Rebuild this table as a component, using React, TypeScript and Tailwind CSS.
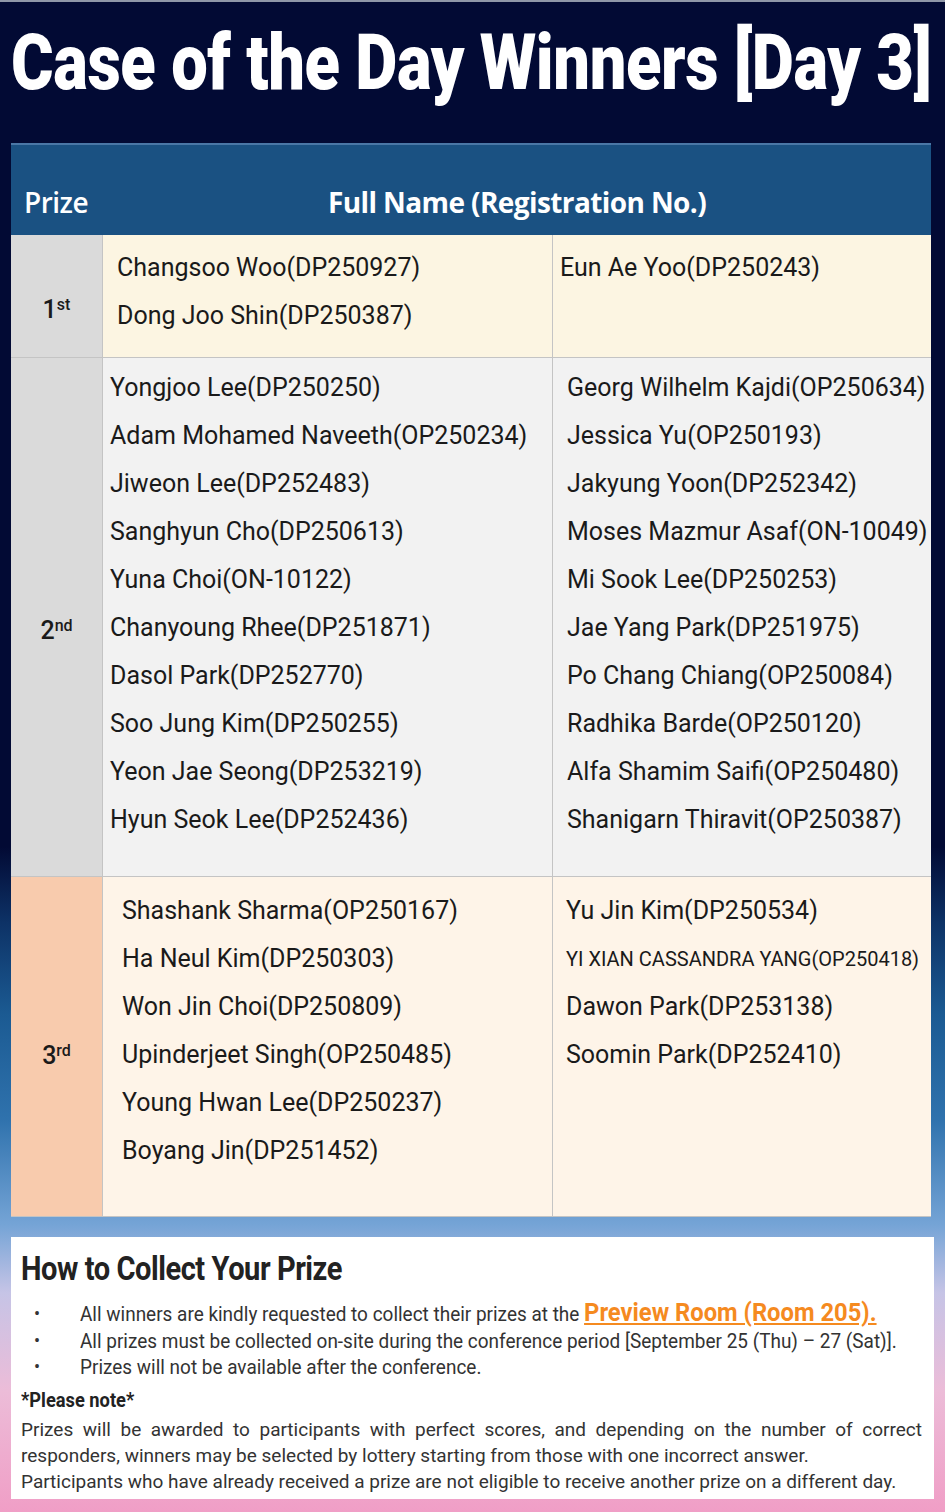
import React from 'react'

// Datos de los ganadores
interface PrizeRow {
  label: string;
  suffix: string;
  height: string;
  prizeBg: string;
  prizePad: string;
  cellBg: string;
  leftPad: string;
  rightPad: string;
  topPad: string;
  left: string[];
  right: string[];
}

const rows: PrizeRow[] = [
  {
    label: '1',
    suffix: 'st',
    height: 'h-[123px]',
    prizeBg: 'bg-[#dadada]',
    prizePad: 'pt-[28px]',
    cellBg: 'bg-[#fcf5e2]',
    leftPad: 'pl-[14px]',
    rightPad: 'pl-[7px]',
    topPad: 'pt-[9px]',
    left: ['Changsoo Woo(DP250927)', 'Dong Joo Shin(DP250387)'],
    right: ['Eun Ae Yoo(DP250243)'],
  },
  {
    label: '2',
    suffix: 'nd',
    height: 'h-[519px]',
    prizeBg: 'bg-[#dadada]',
    prizePad: 'pt-[28px]',
    cellBg: 'bg-[#f2f2f2]',
    leftPad: 'pl-[7px]',
    rightPad: 'pl-[14px]',
    topPad: 'pt-[6px]',
    left: [
      'Yongjoo Lee(DP250250)',
      'Adam Mohamed Naveeth(OP250234)',
      'Jiweon Lee(DP252483)',
      'Sanghyun Cho(DP250613)',
      'Yuna Choi(ON-10122)',
      'Chanyoung Rhee(DP251871)',
      'Dasol Park(DP252770)',
      'Soo Jung Kim(DP250255)',
      'Yeon Jae Seong(DP253219)',
      'Hyun Seok Lee(DP252436)',
    ],
    right: [
      'Georg Wilhelm Kajdi(OP250634)',
      'Jessica Yu(OP250193)',
      'Jakyung Yoon(DP252342)',
      'Moses Mazmur Asaf(ON-10049)',
      'Mi Sook Lee(DP250253)',
      'Jae Yang Park(DP251975)',
      'Po Chang Chiang(OP250084)',
      'Radhika Barde(OP250120)',
      'Alfa Shamim Saifi(OP250480)',
      'Shanigarn Thiravit(OP250387)',
    ],
  },
  {
    label: '3',
    suffix: 'rd',
    height: 'h-[340px]',
    prizeBg: 'bg-[#f8cbad]',
    prizePad: 'pt-[18px]',
    cellBg: 'bg-[#fef4e8]',
    leftPad: 'pl-[19px]',
    rightPad: 'pl-[13px]',
    topPad: 'pt-[10px]',
    left: [
      'Shashank Sharma(OP250167)',
      'Ha Neul Kim(DP250303)',
      'Won Jin Choi(DP250809)',
      'Upinderjeet Singh(OP250485)',
      'Young Hwan Lee(DP250237)',
      'Boyang Jin(DP251452)',
    ],
    right: [
      'Yu Jin Kim(DP250534)',
      'YI XIAN CASSANDRA YANG(OP250418)',
      'Dawon Park(DP253138)',
      'Soomin Park(DP252410)',
    ],
  },
]

function NameList({ names, pad }: { names: string[]; pad: string }) {
  return (
    <ul className={pad}>
      {names.map((n) => (
        <li
          key={n}
          className={
            n === n.toUpperCase()
              ? 'h-[48px] leading-[48px] text-[20px] whitespace-nowrap'
              : 'h-[48px] leading-[48px] text-[25px] whitespace-nowrap'
          }
        >
          {n}
        </li>
      ))}
    </ul>
  )
}

export default function App() {
  return (
    <div
      className="w-[945px] h-[1512px] flex flex-col bg-[linear-gradient(to_bottom,#020a34_0%,#020a34_56%,#0d3266_61%,#1b5a92_67%,#2f72ad_74%,#75a4d6_81%,#c6c4e6_85.5%,#ecbcd8_92%,#f09ec6_100%)] text-[#1a1a1a]"
      style={{ fontFamily: 'Roboto, "Noto Sans", sans-serif' }}
    >
      {/* Título */}
      <div className="h-[143px] border-t-2 border-[#8f97a8] pl-[11px] pt-[16px] overflow-hidden">
        <h1 className="inline-block origin-left scale-x-[0.845] whitespace-nowrap text-[77px] font-black leading-[90px] tracking-[-0.5px] text-white">
          Case of the Day Winners [Day 3]
        </h1>
      </div>

      {/* Tabla */}
      <div className="ml-[11px] w-[920px]">
        <div
          className="flex h-[92px] items-end border-t-2 border-[#4a77a6] bg-[#1a5182] pb-[15px] text-white"
          style={{ fontFamily: '"Open Sans", "Noto Sans", sans-serif' }}
        >
          <div className="w-[92px] pl-[13px] text-[28px] font-semibold leading-[36px] tracking-[-0.5px]">Prize</div>
          <div className="flex-1 text-center text-[28px] font-bold leading-[36px] tracking-[-0.6px]">
            Full Name (Registration No.)
          </div>
        </div>

        {rows.map((r) => (
          <div key={r.label} className={`flex border-b border-[#c4c4c4] ${r.height}`}>
            <div
              className={`w-[92px] shrink-0 flex items-center justify-center border-r border-[#c4c4c4] ${r.prizePad} ${r.prizeBg}`}
            >
              <span className="text-[25px] font-medium">
                {r.label}
                <sup className="text-[16px] font-medium">{r.suffix}</sup>
              </span>
            </div>
            <div className={`w-[450px] shrink-0 border-r border-[#c4c4c4] ${r.cellBg} ${r.leftPad}`}>
              <NameList names={r.left} pad={r.topPad} />
            </div>
            <div className={`flex-1 ${r.cellBg} ${r.rightPad}`}>
              <NameList names={r.right} pad={r.topPad} />
            </div>
          </div>
        ))}
      </div>

      {/* Cómo recoger el premio */}
      <div className="ml-[11px] mt-[20px] w-[923px] h-[262px] bg-white pl-[10px] pr-[12px] pt-[12px]">
        <h2 className="inline-block origin-left scale-x-[0.88] whitespace-nowrap text-[33px] font-bold leading-[40px] tracking-[-0.5px] text-[#222]">
          How to Collect Your Prize
        </h2>
        <ul className="mt-[10px] text-[20.5px] text-[#333]">
          <li className="flex h-[28px] items-end leading-[26px]">
            <span className="w-[59px] shrink-0 pl-[13px] text-[18px]">•</span>
            <span className="inline-block origin-left scale-x-[0.925] whitespace-nowrap">
              All winners are kindly requested to collect their prizes at the{' '}
              <span className="text-[25.7px] font-bold leading-[30px] text-[#f58a1f] underline underline-offset-2">
                Preview Room (Room 205).
              </span>
            </span>
          </li>
          <li className="flex h-[27px] items-end leading-[26px]">
            <span className="w-[59px] shrink-0 pl-[13px] text-[18px]">•</span>
            <span className="inline-block origin-left scale-x-[0.925] whitespace-nowrap">
              All prizes must be collected on-site during the conference period [September 25 (Thu) – 27 (Sat)].
            </span>
          </li>
          <li className="flex h-[26px] items-end leading-[26px]">
            <span className="w-[59px] shrink-0 pl-[13px] text-[18px]">•</span>
            <span className="inline-block origin-left scale-x-[0.925] whitespace-nowrap">
              Prizes will not be available after the conference.
            </span>
          </li>
        </ul>
        <p className="mt-[7px] inline-block origin-left scale-x-[0.87] whitespace-nowrap text-[21px] font-bold leading-[26px] text-[#222]">
          *Please note*
        </p>
        <p className="mt-[3px] text-justify text-[19px] leading-[26px] text-[#333]">
          Prizes will be awarded to participants with perfect scores, and depending on the number of correct
          responders, winners may be selected by lottery starting from those with one incorrect answer.
        </p>
        <p className="text-[19px] leading-[26px] text-[#333]">
          Participants who have already received a prize are not eligible to receive another prize on a different day.
        </p>
      </div>
    </div>
  )
}
